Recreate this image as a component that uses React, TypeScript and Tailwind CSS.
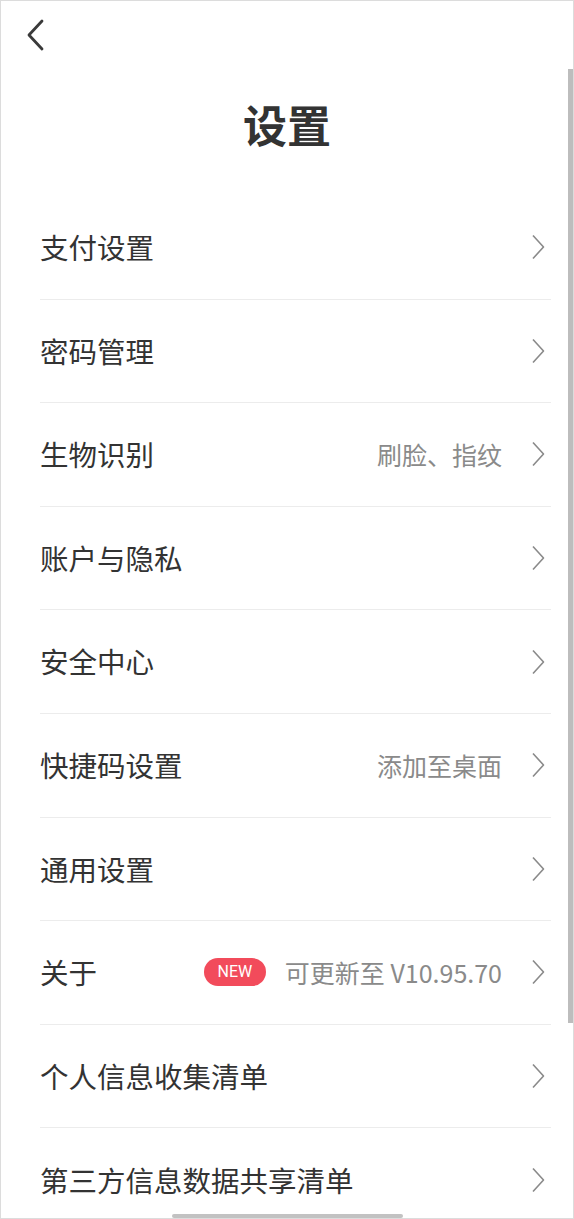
import React from "react";

const rows: { label: string; extra?: string; badge?: boolean }[] = [
  { label: "支付设置" },
  { label: "密码管理" },
  { label: "生物识别", extra: "刷脸、指纹" },
  { label: "账户与隐私" },
  { label: "安全中心" },
  { label: "快捷码设置", extra: "添加至桌面" },
  { label: "通用设置" },
  { label: "关于", extra: "可更新至 V10.95.70", badge: true },
  { label: "个人信息收集清单" },
  { label: "第三方信息数据共享清单" },
];

function Chevron() {
  return (
    <svg width="14" height="26" viewBox="0 0 14 26" fill="none" className="shrink-0 mr-[6px]">
      <path d="M2 1.5 L12.5 13 L2 24.5" stroke="#8a8a8a" strokeWidth="1.6" strokeLinejoin="round" />
    </svg>
  );
}

export default function App() {
  return (
    <main
      className="relative w-[574px] h-[1219px] overflow-hidden bg-white border border-[#dcdcdc] text-[#333]"
      style={{ fontFamily: '"Noto Sans CJK SC", "Noto Sans", sans-serif' }}
    >
      <header className="h-[195px] flex flex-col">
        <div className="h-[66px] pl-[25px] pt-[18px]">
          <svg width="20" height="32" viewBox="0 0 20 32" fill="none">
            <path d="M16 2 L3 16 L16 30" stroke="#3a3a3a" strokeWidth="2.8" strokeLinecap="round" strokeLinejoin="round" />
          </svg>
        </div>
        <h1 className="text-center text-[44px] leading-[60px] font-bold text-[#333] mt-[27px]">设置</h1>
      </header>

      <ul className="px-[39px] pr-[22px]">
        {rows.map((r, i) => (
          <li
            key={r.label}
            className={`h-[103.6px] flex items-center ${i < rows.length - 1 ? "border-b border-[#ececec]" : ""}`}
          >
            <span className="text-[28.5px] leading-none text-[#333] flex-1">{r.label}</span>
            {r.badge && (
              <span className="mr-[19px] h-[28px] w-[62px] rounded-full bg-[#f24b5b] text-white text-[16px] flex items-center justify-center"
                style={{ fontFamily: '"Roboto", "Noto Sans", sans-serif' }}>
                NEW
              </span>
            )}
            {r.extra && (
              <span className="text-[25px] leading-none text-[#8a8a8a] mr-[29px]">{r.extra}</span>
            )}
            <Chevron />
          </li>
        ))}
      </ul>

      <div className="absolute right-0 top-[68px] w-[5px] h-[954px] bg-[#bdbdbd]" />
      <div className="absolute left-[171px] bottom-0 w-[231px] h-[4px] rounded-full bg-[#c2c2c2]" />
    </main>
  );
}
